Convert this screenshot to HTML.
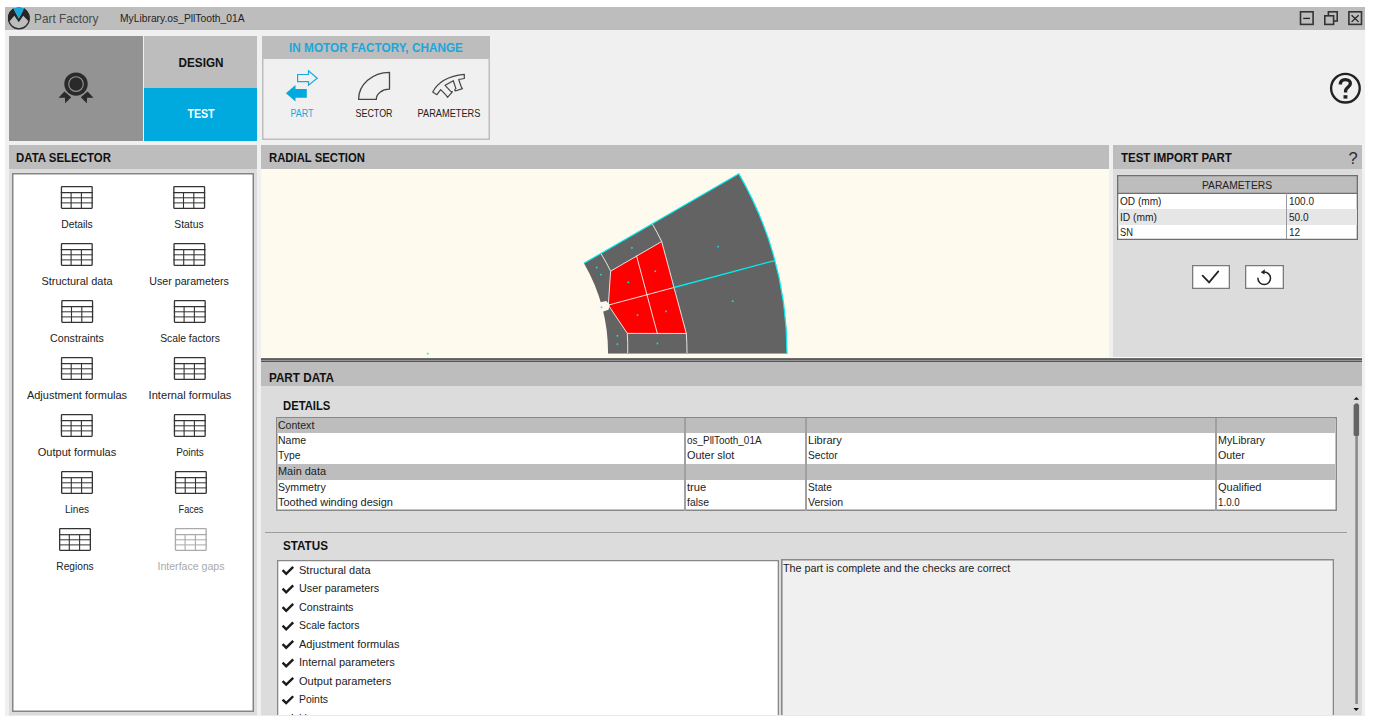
<!DOCTYPE html>
<html><head><meta charset="utf-8"><style>
html,body{margin:0;padding:0;background:#fff;width:1373px;height:725px;overflow:hidden;position:relative;font-family:"Liberation Sans", sans-serif;}
</style></head><body>
<div style="position:absolute;left:5px;top:7px;width:1360px;height:709px;background:#f0f0f0"></div><div style="position:absolute;left:5px;top:7px;width:1360px;height:23px;background:#bdbdbd"></div><svg style="position:absolute;left:5px;top:5px" width="30" height="27" viewBox="5 5 30 27"><circle cx="18.9" cy="18.4" r="10.4" fill="none" stroke="#2b2b2b" stroke-width="1.2"/>
<path d="M9,21.9 A10.6,10.6 0 0 1 12.4,8.9 L13.1,7.9 L18.8,18.4 L24.4,7.9 L25.2,8.9 A10.6,10.6 0 0 1 28.8,21.5 L23.2,15.7 L18.8,22.2 L14.3,15.7 Z" fill="#262626"/>
<path d="M13.1,7.9 L24.4,7.9 L18.8,18.4 Z" fill="#1aa7dc"/></svg><div style="position:absolute;left:33.60px;top:12.77px;font-size:12.20px;line-height:12.20px;font-weight:400;color:#4a4a4a;white-space:nowrap;transform-origin:0 0;transform:scaleX(0.9695);">Part Factory</div><div style="position:absolute;left:119.50px;top:13.16px;font-size:10.80px;line-height:10.80px;font-weight:400;color:#1e1e1e;white-space:nowrap;transform-origin:0 0;transform:scaleX(0.9535);">MyLibrary.os_PllTooth_01A</div><svg style="position:absolute;left:1290px;top:8px" width="75" height="22" viewBox="1290 8 75 22"><rect x="1300.5" y="11.8" width="12.6" height="12.6" fill="none" stroke="#333" stroke-width="1.6"/>
<line x1="1303.2" y1="18.4" x2="1310" y2="18.4" stroke="#222" stroke-width="1.3"/>
<rect x="1328.4" y="11.8" width="8.8" height="9.2" fill="none" stroke="#333" stroke-width="1.6"/>
<rect x="1324.8" y="15.8" width="8.8" height="8.6" fill="#bdbdbd" stroke="#333" stroke-width="1.6"/>
<rect x="1348.9" y="11.8" width="12.6" height="12.6" fill="none" stroke="#333" stroke-width="1.6"/>
<line x1="1351.6" y1="15.2" x2="1358.6" y2="21.9" stroke="#222" stroke-width="1.3"/>
<line x1="1358.6" y1="15.2" x2="1351.6" y2="21.9" stroke="#222" stroke-width="1.3"/></svg><div style="position:absolute;left:9px;top:36px;width:134px;height:104.5px;background:#939393"></div><svg style="position:absolute;left:50px;top:65px" width="50" height="45" viewBox="50 65 50 45"><path d="M64.4,91.6 L58.5,97.7 L64.9,97.7 L65.2,103.3 L71.2,97.2 Z" fill="#2a2a2a"/>
<path d="M87.6,91.6 L93.5,97.7 L87.1,97.7 L86.8,103.3 L80.8,97.2 Z" fill="#2a2a2a"/>
<circle cx="76" cy="84.1" r="12.3" fill="#939393"/>
<circle cx="76" cy="84.1" r="11.7" fill="#2a2a2a"/>
<circle cx="76" cy="84.1" r="7.3" fill="none" stroke="#939393" stroke-width="1.1"/></svg><div style="position:absolute;left:144.4px;top:36px;width:112.6px;height:52px;background:#bdbdbd"></div><div style="position:absolute;left:-99.30px;width:600px;text-align:center;top:55.88px;font-size:13.02px;line-height:13.02px;font-weight:700;color:#111;white-space:nowrap;transform-origin:50% 0;transform:scaleX(0.9010);">DESIGN</div><div style="position:absolute;left:144.4px;top:88px;width:112.6px;height:52.5px;background:#00a9de"></div><div style="position:absolute;left:-99.30px;width:600px;text-align:center;top:108.48px;font-size:12.43px;line-height:12.43px;font-weight:700;color:#fff;white-space:nowrap;transform-origin:50% 0;transform:scaleX(0.8565);">TEST</div><div style="position:absolute;left:262px;top:36px;width:227.5px;height:104.30000000000001px;background:#f0f0f0;box-shadow:inset 0 0 0 1.5px #bdbdbd"></div><div style="position:absolute;left:262px;top:36px;width:227.5px;height:23.4px;background:#bdbdbd"></div><div style="position:absolute;left:76.30px;width:600px;text-align:center;top:41.89px;font-size:12.65px;line-height:12.65px;font-weight:700;color:#1aa7dc;white-space:nowrap;transform-origin:50% 0;transform:scaleX(0.9321);">IN MOTOR FACTORY, CHANGE</div><svg style="position:absolute;left:280px;top:62px" width="200" height="45" viewBox="280 62 200 45"><path d="M297.6,74.5 H308.5 V70.8 L317.2,78.2 L308.5,85.3 V81.6 H297.6 Z" fill="none" stroke="#1ba9dc" stroke-width="1.2" stroke-linejoin="miter"/>
<path d="M285.9,93.3 L295.5,85 V89.1 H306.8 V97.7 H295.5 V101.5 Z" fill="#00a9de"/>
<path d="M358.6,99.4 A31,27 0 0 1 389.5,72.3 V89.2 A13,10 0 0 0 376.3,99.4 Z" fill="none" stroke="#444" stroke-width="1.3" stroke-linejoin="round"/>
<path d="M432.7,92.1 Q440.3,76.8 464.3,74.3 L464.3,78.5 L458.7,79.5 L461.3,87 L462.5,88.6 L455.2,91 L454.7,89.6 L455.9,88.6 L453.3,80.7 L445.1,85.3 L450.5,91.2 L452.4,91.9 L447.5,97.3 L446.5,95.7 L440.7,89.6 L436.9,94.7 Z" fill="none" stroke="#444" stroke-width="1.2" stroke-linejoin="round"/></svg><div style="position:absolute;left:1.80px;width:600px;text-align:center;top:108.34px;font-size:10.82px;line-height:10.82px;font-weight:400;color:#1ba9dc;white-space:nowrap;transform-origin:50% 0;transform:scaleX(0.8326);">PART</div><div style="position:absolute;left:74.20px;width:600px;text-align:center;top:108.34px;font-size:10.82px;line-height:10.82px;font-weight:400;color:#222;white-space:nowrap;transform-origin:50% 0;transform:scaleX(0.8262);">SECTOR</div><div style="position:absolute;left:148.60px;width:600px;text-align:center;top:108.34px;font-size:10.82px;line-height:10.82px;font-weight:400;color:#222;white-space:nowrap;transform-origin:50% 0;transform:scaleX(0.8516);">PARAMETERS</div><svg style="position:absolute;left:1325px;top:68px" width="40" height="40" viewBox="1325 68 40 40"><circle cx="1345.4" cy="88.2" r="14.3" fill="none" stroke="#222" stroke-width="2.4"/></svg><svg style="position:absolute;left:1330px;top:72px" width="32" height="32" viewBox="1330 72 32 32"><path d="M1340.3,84.6 C1340.3,80.6 1342.6,79.6 1345.3,79.6 C1348.6,79.6 1350.4,81.4 1350.4,83.6 C1350.4,86.6 1346.4,87.6 1345.6,90.2 L1345.6,92.6" fill="none" stroke="#222" stroke-width="3.3"/><rect x="1343.5" y="95.2" width="3.9" height="3.4" fill="#222"/></svg><div style="position:absolute;left:9px;top:145px;width:248.3px;height:571px;background:#dcdcdc"></div><div style="position:absolute;left:9px;top:145px;width:248.3px;height:24.400000000000006px;background:#bdbdbd"></div><div style="position:absolute;left:16.00px;top:152.20px;font-size:12.76px;line-height:12.76px;font-weight:700;color:#111;white-space:nowrap;transform-origin:0 0;transform:scaleX(0.8975);">DATA SELECTOR</div><div style="position:absolute;left:11.8px;top:172.8px;width:242.2px;height:539.0px;background:#fff;box-shadow:inset 0 0 0 1.5px #858585"></div><div style="position:absolute;left:-223.20px;width:600px;text-align:center;top:219.31px;font-size:10.50px;line-height:10.50px;font-weight:400;color:#222;white-space:nowrap;transform-origin:50% 0;transform:scaleX(0.9851);">Details</div><div style="position:absolute;left:-110.80px;width:600px;text-align:center;top:219.31px;font-size:10.50px;line-height:10.50px;font-weight:400;color:#222;white-space:nowrap;transform-origin:50% 0;transform:scaleX(0.9877);">Status</div><div style="position:absolute;left:-223.20px;width:600px;text-align:center;top:276.21px;font-size:10.50px;line-height:10.50px;font-weight:400;color:#222;white-space:nowrap;transform-origin:50% 0;transform:scaleX(1.0410);">Structural data</div><div style="position:absolute;left:-110.60px;width:600px;text-align:center;top:276.21px;font-size:10.50px;line-height:10.50px;font-weight:400;color:#222;white-space:nowrap;transform-origin:50% 0;transform:scaleX(1.0183);">User parameters</div><div style="position:absolute;left:-222.80px;width:600px;text-align:center;top:333.11px;font-size:10.50px;line-height:10.50px;font-weight:400;color:#222;white-space:nowrap;transform-origin:50% 0;transform:scaleX(1.0126);">Constraints</div><div style="position:absolute;left:-110.20px;width:600px;text-align:center;top:333.11px;font-size:10.50px;line-height:10.50px;font-weight:400;color:#222;white-space:nowrap;transform-origin:50% 0;transform:scaleX(0.9820);">Scale factors</div><div style="position:absolute;left:-223.10px;width:600px;text-align:center;top:390.01px;font-size:10.50px;line-height:10.50px;font-weight:400;color:#222;white-space:nowrap;transform-origin:50% 0;transform:scaleX(1.0469);">Adjustment formulas</div><div style="position:absolute;left:-110.20px;width:600px;text-align:center;top:390.01px;font-size:10.50px;line-height:10.50px;font-weight:400;color:#222;white-space:nowrap;transform-origin:50% 0;transform:scaleX(1.0585);">Internal formulas</div><div style="position:absolute;left:-223.20px;width:600px;text-align:center;top:446.91px;font-size:10.50px;line-height:10.50px;font-weight:400;color:#222;white-space:nowrap;transform-origin:50% 0;transform:scaleX(1.0521);">Output formulas</div><div style="position:absolute;left:-110.20px;width:600px;text-align:center;top:446.91px;font-size:10.50px;line-height:10.50px;font-weight:400;color:#222;white-space:nowrap;transform-origin:50% 0;transform:scaleX(0.9490);">Points</div><div style="position:absolute;left:-223.00px;width:600px;text-align:center;top:503.81px;font-size:10.50px;line-height:10.50px;font-weight:400;color:#222;white-space:nowrap;transform-origin:50% 0;transform:scaleX(0.9564);">Lines</div><div style="position:absolute;left:-109.10px;width:600px;text-align:center;top:503.81px;font-size:10.50px;line-height:10.50px;font-weight:400;color:#222;white-space:nowrap;transform-origin:50% 0;transform:scaleX(0.8668);">Faces</div><div style="position:absolute;left:-225.00px;width:600px;text-align:center;top:560.71px;font-size:10.50px;line-height:10.50px;font-weight:400;color:#222;white-space:nowrap;transform-origin:50% 0;transform:scaleX(0.9680);">Regions</div><div style="position:absolute;left:-109.20px;width:600px;text-align:center;top:560.71px;font-size:10.50px;line-height:10.50px;font-weight:400;color:#aaa;white-space:nowrap;transform-origin:50% 0;transform:scaleX(1.0080);">Interface gaps</div><svg style="position:absolute;left:40px;top:180px" width="190" height="380" viewBox="40 180 190 380"><g stroke="#333" fill="none">
<rect x="61.449999999999996" y="186.65" width="30.7" height="21.7" stroke-width="1.3" rx="0.5"/>
<line x1="60.8" y1="192.7" x2="92.8" y2="192.7" stroke-width="1.2"/>
<line x1="60.8" y1="197.8" x2="92.8" y2="197.8" stroke-width="1.0"/>
<line x1="60.8" y1="202.9" x2="92.8" y2="202.9" stroke-width="1.0"/>
<line x1="71.1" y1="193" x2="71.1" y2="208" stroke-width="1.1"/>
<line x1="81.4" y1="193" x2="81.4" y2="208" stroke-width="1.1"/>
</g><g stroke="#333" fill="none">
<rect x="173.85" y="186.65" width="30.7" height="21.7" stroke-width="1.3" rx="0.5"/>
<line x1="173.2" y1="192.7" x2="205.2" y2="192.7" stroke-width="1.2"/>
<line x1="173.2" y1="197.8" x2="205.2" y2="197.8" stroke-width="1.0"/>
<line x1="173.2" y1="202.9" x2="205.2" y2="202.9" stroke-width="1.0"/>
<line x1="183.5" y1="193" x2="183.5" y2="208" stroke-width="1.1"/>
<line x1="193.79999999999998" y1="193" x2="193.79999999999998" y2="208" stroke-width="1.1"/>
</g><g stroke="#333" fill="none">
<rect x="61.449999999999996" y="243.65" width="30.7" height="21.7" stroke-width="1.3" rx="0.5"/>
<line x1="60.8" y1="249.7" x2="92.8" y2="249.7" stroke-width="1.2"/>
<line x1="60.8" y1="254.8" x2="92.8" y2="254.8" stroke-width="1.0"/>
<line x1="60.8" y1="259.9" x2="92.8" y2="259.9" stroke-width="1.0"/>
<line x1="71.1" y1="250" x2="71.1" y2="265" stroke-width="1.1"/>
<line x1="81.4" y1="250" x2="81.4" y2="265" stroke-width="1.1"/>
</g><g stroke="#333" fill="none">
<rect x="174.05" y="243.65" width="30.7" height="21.7" stroke-width="1.3" rx="0.5"/>
<line x1="173.4" y1="249.7" x2="205.4" y2="249.7" stroke-width="1.2"/>
<line x1="173.4" y1="254.8" x2="205.4" y2="254.8" stroke-width="1.0"/>
<line x1="173.4" y1="259.9" x2="205.4" y2="259.9" stroke-width="1.0"/>
<line x1="183.70000000000002" y1="250" x2="183.70000000000002" y2="265" stroke-width="1.1"/>
<line x1="194.0" y1="250" x2="194.0" y2="265" stroke-width="1.1"/>
</g><g stroke="#333" fill="none">
<rect x="61.85" y="300.65" width="30.7" height="21.7" stroke-width="1.3" rx="0.5"/>
<line x1="61.2" y1="306.7" x2="93.2" y2="306.7" stroke-width="1.2"/>
<line x1="61.2" y1="311.8" x2="93.2" y2="311.8" stroke-width="1.0"/>
<line x1="61.2" y1="316.9" x2="93.2" y2="316.9" stroke-width="1.0"/>
<line x1="71.5" y1="307" x2="71.5" y2="322" stroke-width="1.1"/>
<line x1="81.80000000000001" y1="307" x2="81.80000000000001" y2="322" stroke-width="1.1"/>
</g><g stroke="#333" fill="none">
<rect x="174.45000000000002" y="300.65" width="30.7" height="21.7" stroke-width="1.3" rx="0.5"/>
<line x1="173.8" y1="306.7" x2="205.8" y2="306.7" stroke-width="1.2"/>
<line x1="173.8" y1="311.8" x2="205.8" y2="311.8" stroke-width="1.0"/>
<line x1="173.8" y1="316.9" x2="205.8" y2="316.9" stroke-width="1.0"/>
<line x1="184.10000000000002" y1="307" x2="184.10000000000002" y2="322" stroke-width="1.1"/>
<line x1="194.4" y1="307" x2="194.4" y2="322" stroke-width="1.1"/>
</g><g stroke="#333" fill="none">
<rect x="61.550000000000004" y="357.65" width="30.7" height="21.7" stroke-width="1.3" rx="0.5"/>
<line x1="60.900000000000006" y1="363.7" x2="92.9" y2="363.7" stroke-width="1.2"/>
<line x1="60.900000000000006" y1="368.8" x2="92.9" y2="368.8" stroke-width="1.0"/>
<line x1="60.900000000000006" y1="373.9" x2="92.9" y2="373.9" stroke-width="1.0"/>
<line x1="71.2" y1="364" x2="71.2" y2="379" stroke-width="1.1"/>
<line x1="81.5" y1="364" x2="81.5" y2="379" stroke-width="1.1"/>
</g><g stroke="#333" fill="none">
<rect x="174.45000000000002" y="357.65" width="30.7" height="21.7" stroke-width="1.3" rx="0.5"/>
<line x1="173.8" y1="363.7" x2="205.8" y2="363.7" stroke-width="1.2"/>
<line x1="173.8" y1="368.8" x2="205.8" y2="368.8" stroke-width="1.0"/>
<line x1="173.8" y1="373.9" x2="205.8" y2="373.9" stroke-width="1.0"/>
<line x1="184.10000000000002" y1="364" x2="184.10000000000002" y2="379" stroke-width="1.1"/>
<line x1="194.4" y1="364" x2="194.4" y2="379" stroke-width="1.1"/>
</g><g stroke="#333" fill="none">
<rect x="61.449999999999996" y="414.65" width="30.7" height="21.7" stroke-width="1.3" rx="0.5"/>
<line x1="60.8" y1="420.7" x2="92.8" y2="420.7" stroke-width="1.2"/>
<line x1="60.8" y1="425.8" x2="92.8" y2="425.8" stroke-width="1.0"/>
<line x1="60.8" y1="430.9" x2="92.8" y2="430.9" stroke-width="1.0"/>
<line x1="71.1" y1="421" x2="71.1" y2="436" stroke-width="1.1"/>
<line x1="81.4" y1="421" x2="81.4" y2="436" stroke-width="1.1"/>
</g><g stroke="#333" fill="none">
<rect x="174.45000000000002" y="414.65" width="30.7" height="21.7" stroke-width="1.3" rx="0.5"/>
<line x1="173.8" y1="420.7" x2="205.8" y2="420.7" stroke-width="1.2"/>
<line x1="173.8" y1="425.8" x2="205.8" y2="425.8" stroke-width="1.0"/>
<line x1="173.8" y1="430.9" x2="205.8" y2="430.9" stroke-width="1.0"/>
<line x1="184.10000000000002" y1="421" x2="184.10000000000002" y2="436" stroke-width="1.1"/>
<line x1="194.4" y1="421" x2="194.4" y2="436" stroke-width="1.1"/>
</g><g stroke="#333" fill="none">
<rect x="61.65" y="471.65" width="30.7" height="21.7" stroke-width="1.3" rx="0.5"/>
<line x1="61.0" y1="477.7" x2="93.0" y2="477.7" stroke-width="1.2"/>
<line x1="61.0" y1="482.8" x2="93.0" y2="482.8" stroke-width="1.0"/>
<line x1="61.0" y1="487.9" x2="93.0" y2="487.9" stroke-width="1.0"/>
<line x1="71.3" y1="478" x2="71.3" y2="493" stroke-width="1.1"/>
<line x1="81.6" y1="478" x2="81.6" y2="493" stroke-width="1.1"/>
</g><g stroke="#333" fill="none">
<rect x="175.55" y="471.65" width="30.7" height="21.7" stroke-width="1.3" rx="0.5"/>
<line x1="174.9" y1="477.7" x2="206.9" y2="477.7" stroke-width="1.2"/>
<line x1="174.9" y1="482.8" x2="206.9" y2="482.8" stroke-width="1.0"/>
<line x1="174.9" y1="487.9" x2="206.9" y2="487.9" stroke-width="1.0"/>
<line x1="185.20000000000002" y1="478" x2="185.20000000000002" y2="493" stroke-width="1.1"/>
<line x1="195.5" y1="478" x2="195.5" y2="493" stroke-width="1.1"/>
</g><g stroke="#333" fill="none">
<rect x="59.65" y="528.65" width="30.7" height="21.7" stroke-width="1.3" rx="0.5"/>
<line x1="59.0" y1="534.7" x2="91.0" y2="534.7" stroke-width="1.2"/>
<line x1="59.0" y1="539.8" x2="91.0" y2="539.8" stroke-width="1.0"/>
<line x1="59.0" y1="544.9" x2="91.0" y2="544.9" stroke-width="1.0"/>
<line x1="69.3" y1="535" x2="69.3" y2="550" stroke-width="1.1"/>
<line x1="79.6" y1="535" x2="79.6" y2="550" stroke-width="1.1"/>
</g><g stroke="#aaa" fill="none">
<rect x="175.45000000000002" y="528.65" width="30.7" height="21.7" stroke-width="1.3" rx="0.5"/>
<line x1="174.8" y1="534.7" x2="206.8" y2="534.7" stroke-width="1.2"/>
<line x1="174.8" y1="539.8" x2="206.8" y2="539.8" stroke-width="1.0"/>
<line x1="174.8" y1="544.9" x2="206.8" y2="544.9" stroke-width="1.0"/>
<line x1="185.10000000000002" y1="535" x2="185.10000000000002" y2="550" stroke-width="1.1"/>
<line x1="195.4" y1="535" x2="195.4" y2="550" stroke-width="1.1"/>
</g></svg><div style="position:absolute;left:261px;top:145px;width:848.4000000000001px;height:24.400000000000006px;background:#bdbdbd"></div><div style="position:absolute;left:269.00px;top:152.20px;font-size:12.76px;line-height:12.76px;font-weight:700;color:#111;white-space:nowrap;transform-origin:0 0;transform:scaleX(0.8872);">RADIAL SECTION</div><div style="position:absolute;left:261px;top:169.4px;width:848.4000000000001px;height:187.6px;background:#fefaee"></div><div style="position:absolute;left:1113px;top:145px;width:249px;height:213px;background:#dcdcdc"></div><div style="position:absolute;left:1113px;top:145px;width:249px;height:24.400000000000006px;background:#bdbdbd"></div><div style="position:absolute;left:1121.00px;top:152.20px;font-size:12.76px;line-height:12.76px;font-weight:700;color:#111;white-space:nowrap;transform-origin:0 0;transform:scaleX(0.9015);">TEST IMPORT PART</div><div style="position:absolute;left:1053.00px;width:600px;text-align:center;top:150.03px;font-size:16.50px;line-height:16.50px;font-weight:400;color:#2a2a2a;white-space:nowrap;transform-origin:50% 0;">?</div><div style="position:absolute;left:261px;top:357px;width:1101px;height:1px;background:#fafafa"></div><div style="position:absolute;left:261px;top:358px;width:1101px;height:1px;background:#6c6c6c"></div><div style="position:absolute;left:261px;top:359px;width:1101px;height:1px;background:#5e5e5e"></div><div style="position:absolute;left:261px;top:360px;width:1101px;height:1px;background:#959595"></div><div style="position:absolute;left:261px;top:361px;width:1101px;height:1px;background:#575757"></div><div style="position:absolute;left:261px;top:362px;width:1101px;height:353px;background:#dcdcdc"></div><div style="position:absolute;left:261px;top:362px;width:1101px;height:24px;background:#bdbdbd"></div><div style="position:absolute;left:269.00px;top:372.00px;font-size:12.76px;line-height:12.76px;font-weight:700;color:#111;white-space:nowrap;transform-origin:0 0;transform:scaleX(0.9170);">PART DATA</div><svg style="position:absolute;left:261px;top:169px" width="848" height="189" viewBox="261 169 848 189"><path d="M608.10,353.50 L787.00,353.50 A359.3,359.3 0 0 0 738.86,173.85 L583.93,263.30 A180.4,180.4 0 0 1 608.10,353.50 Z" fill="#636363"/>
<path d="M661.69,241.52 L686.33,333.48 L627.29,333.36 L608.33,305.10 L610.62,271.15 Z" fill="#ff0000" stroke="#f4f4f4" stroke-width="0.9"/>
<path d="M596.36,302.93 L606.17,300.92 L609.78,304.71 L608.55,309.80 L599.05,312.97 Z" fill="#fdf9ee"/>
<path d="M608.33,305.10 L674.01,287.50" stroke="#f4f4f4" stroke-width="0.9"/>
<path d="M636.48,255.63 L657.45,333.87" stroke="#f4f4f4" stroke-width="0.9"/>
<path d="M600.91,253.50 A200,200 0 0 1 610.62,271.15" fill="none" stroke="#f4f4f4" stroke-width="0.9"/>
<path d="M627.29,333.36 A200,200 0 0 1 627.70,353.50" fill="none" stroke="#f4f4f4" stroke-width="0.9"/>
<path d="M652.26,223.85 A259.3,259.3 0 0 1 661.69,241.52" fill="none" stroke="#f4f4f4" stroke-width="0.9"/>
<path d="M686.33,333.48 A259.3,259.3 0 0 1 687.00,353.50" fill="none" stroke="#f4f4f4" stroke-width="0.9"/>
<path d="M674.01,287.50 L774.76,260.51" stroke="#00ecf0" stroke-width="1.3"/>
<path d="M608.10,353.50 L787.00,353.50 A359.3,359.3 0 0 0 738.86,173.85 L583.93,263.30" fill="none" stroke="#00ecf0" stroke-width="1.2"/>
<rect x="631.1" y="247.1" width="1.6" height="1.6" fill="#00ecf0"/><rect x="595.9" y="266.7" width="1.6" height="1.6" fill="#00ecf0"/><rect x="600.1" y="273.8" width="1.6" height="1.6" fill="#00ecf0"/><rect x="627.6" y="281.6" width="1.6" height="1.6" fill="#00ecf0"/><rect x="654.5" y="270.5" width="1.6" height="1.6" fill="#00ecf0"/><rect x="636.7" y="314.3" width="1.6" height="1.6" fill="#00ecf0"/><rect x="665.3" y="310.6" width="1.6" height="1.6" fill="#00ecf0"/><rect x="616.6" y="335.0" width="1.6" height="1.6" fill="#00ecf0"/><rect x="616.6" y="343.3" width="1.6" height="1.6" fill="#00ecf0"/><rect x="656.6" y="342.7" width="1.6" height="1.6" fill="#00ecf0"/><rect x="600.7" y="306.5" width="1.6" height="1.6" fill="#00ecf0"/><rect x="672.5" y="283.3" width="1.6" height="1.6" fill="#00ecf0"/><rect x="674.6" y="290.5" width="1.6" height="1.6" fill="#00ecf0"/><rect x="717.3" y="245.8" width="1.6" height="1.6" fill="#00ecf0"/><rect x="731.9" y="300.4" width="1.6" height="1.6" fill="#00ecf0"/><rect x="426.9" y="352.8" width="1.6" height="1.6" fill="#00ecf0"/></svg><div style="position:absolute;left:1117px;top:175px;width:241px;height:65px;background:#fff;box-shadow:inset 0 0 0 1.3px #6f6f6f"></div><div style="position:absolute;left:1117px;top:175px;width:241px;height:19px;background:#bdbdbd;box-shadow:inset 0 0 0 1.3px #6f6f6f"></div><div style="position:absolute;left:1118.3px;top:209px;width:238.4000000000001px;height:15.5px;background:#e6e6e6"></div><div style="position:absolute;left:1286px;top:193px;width:1.2999999999999545px;height:46px;background:#9a9a9a"></div><div style="position:absolute;left:936.80px;width:600px;text-align:center;top:181.00px;font-size:10.40px;line-height:10.40px;font-weight:400;color:#222;white-space:nowrap;transform-origin:50% 0;transform:scaleX(0.9905);">PARAMETERS</div><div style="position:absolute;left:1119.60px;top:197.28px;font-size:10.30px;line-height:10.30px;font-weight:400;color:#222;white-space:nowrap;transform-origin:0 0;transform:scaleX(0.9803);">OD (mm)</div><div style="position:absolute;left:1288.90px;top:197.28px;font-size:10.30px;line-height:10.30px;font-weight:400;color:#222;white-space:nowrap;transform-origin:0 0;transform:scaleX(0.9689);">100.0</div><div style="position:absolute;left:1119.60px;top:212.73px;font-size:10.30px;line-height:10.30px;font-weight:400;color:#222;white-space:nowrap;transform-origin:0 0;transform:scaleX(0.9951);">ID (mm)</div><div style="position:absolute;left:1288.90px;top:212.73px;font-size:10.30px;line-height:10.30px;font-weight:400;color:#222;white-space:nowrap;transform-origin:0 0;transform:scaleX(0.9784);">50.0</div><div style="position:absolute;left:1119.60px;top:228.18px;font-size:10.30px;line-height:10.30px;font-weight:400;color:#222;white-space:nowrap;transform-origin:0 0;transform:scaleX(0.9010);">SN</div><div style="position:absolute;left:1288.90px;top:228.18px;font-size:10.30px;line-height:10.30px;font-weight:400;color:#222;white-space:nowrap;transform-origin:0 0;transform:scaleX(0.9796);">12</div><div style="position:absolute;left:1191.5px;top:265.3px;width:38.59999999999991px;height:23.69999999999999px;background:#fff;box-shadow:inset 0 0 0 1.3px #7a7a7a"></div><div style="position:absolute;left:1245px;top:265.3px;width:38.59999999999991px;height:23.69999999999999px;background:#fff;box-shadow:inset 0 0 0 1.3px #7a7a7a"></div><svg style="position:absolute;left:1190px;top:262px" width="100" height="30" viewBox="1190 262 100 30"><polyline points="1202.6,275.6 1209.1,282.4 1218.3,271.4" fill="none" stroke="#222" stroke-width="1.7" stroke-linecap="round" stroke-linejoin="miter"/>
<path d="M1257.9,278.3 A6.3,6.3 0 1 0 1264.2,272" fill="none" stroke="#222" stroke-width="1.5" stroke-linecap="round"/>
<path d="M1260.8,272.2 L1264.9,269.2 L1264.5,274.6 Z" fill="#222"/></svg><div style="position:absolute;left:283.20px;top:399.90px;font-size:12.76px;line-height:12.76px;font-weight:700;color:#111;white-space:nowrap;transform-origin:0 0;transform:scaleX(0.8834);">DETAILS</div><div style="position:absolute;left:276px;top:416.8px;width:1060.5px;height:94.19999999999999px;background:#fff;box-shadow:inset 0 0 0 1.5px #888"></div><div style="position:absolute;left:277.3px;top:418.3px;width:1057.9px;height:15.099999999999966px;background:#bdbdbd"></div><div style="position:absolute;left:277.3px;top:464.0px;width:1057.9px;height:15.600000000000023px;background:#bdbdbd"></div><div style="position:absolute;left:684.1px;top:418px;width:1.5px;height:92.5px;background:#a0a0a0"></div><div style="position:absolute;left:805.3px;top:418px;width:1.5px;height:92.5px;background:#a0a0a0"></div><div style="position:absolute;left:1215.3px;top:418px;width:1.5px;height:92.5px;background:#a0a0a0"></div><div style="position:absolute;left:278.00px;top:420.78px;font-size:10.30px;line-height:10.30px;font-weight:400;color:#222;white-space:nowrap;transform-origin:0 0;transform:scaleX(1.0230);">Context</div><div style="position:absolute;left:278.00px;top:436.08px;font-size:10.30px;line-height:10.30px;font-weight:400;color:#222;white-space:nowrap;transform-origin:0 0;transform:scaleX(1.0218);">Name</div><div style="position:absolute;left:686.80px;top:436.08px;font-size:10.30px;line-height:10.30px;font-weight:400;color:#222;white-space:nowrap;transform-origin:0 0;transform:scaleX(0.9644);">os_PllTooth_01A</div><div style="position:absolute;left:808.00px;top:436.08px;font-size:10.30px;line-height:10.30px;font-weight:400;color:#222;white-space:nowrap;transform-origin:0 0;transform:scaleX(1.0742);">Library</div><div style="position:absolute;left:1217.50px;top:436.08px;font-size:10.30px;line-height:10.30px;font-weight:400;color:#222;white-space:nowrap;transform-origin:0 0;transform:scaleX(1.0350);">MyLibrary</div><div style="position:absolute;left:278.00px;top:451.48px;font-size:10.30px;line-height:10.30px;font-weight:400;color:#222;white-space:nowrap;transform-origin:0 0;transform:scaleX(1.0022);">Type</div><div style="position:absolute;left:686.80px;top:451.48px;font-size:10.30px;line-height:10.30px;font-weight:400;color:#222;white-space:nowrap;transform-origin:0 0;transform:scaleX(1.0593);">Outer slot</div><div style="position:absolute;left:808.00px;top:451.48px;font-size:10.30px;line-height:10.30px;font-weight:400;color:#222;white-space:nowrap;transform-origin:0 0;transform:scaleX(0.9944);">Sector</div><div style="position:absolute;left:1217.50px;top:451.48px;font-size:10.30px;line-height:10.30px;font-weight:400;color:#222;white-space:nowrap;transform-origin:0 0;transform:scaleX(1.0369);">Outer</div><div style="position:absolute;left:278.00px;top:467.08px;font-size:10.30px;line-height:10.30px;font-weight:400;color:#222;white-space:nowrap;transform-origin:0 0;transform:scaleX(1.0625);">Main data</div><div style="position:absolute;left:278.00px;top:482.78px;font-size:10.30px;line-height:10.30px;font-weight:400;color:#222;white-space:nowrap;transform-origin:0 0;transform:scaleX(1.0291);">Symmetry</div><div style="position:absolute;left:686.80px;top:482.78px;font-size:10.30px;line-height:10.30px;font-weight:400;color:#222;white-space:nowrap;transform-origin:0 0;transform:scaleX(1.0806);">true</div><div style="position:absolute;left:808.00px;top:482.78px;font-size:10.30px;line-height:10.30px;font-weight:400;color:#222;white-space:nowrap;transform-origin:0 0;transform:scaleX(0.9896);">State</div><div style="position:absolute;left:1217.50px;top:482.78px;font-size:10.30px;line-height:10.30px;font-weight:400;color:#222;white-space:nowrap;transform-origin:0 0;transform:scaleX(1.0681);">Qualified</div><div style="position:absolute;left:278.00px;top:497.78px;font-size:10.30px;line-height:10.30px;font-weight:400;color:#222;white-space:nowrap;transform-origin:0 0;transform:scaleX(1.0684);">Toothed winding design</div><div style="position:absolute;left:686.80px;top:497.78px;font-size:10.30px;line-height:10.30px;font-weight:400;color:#222;white-space:nowrap;transform-origin:0 0;transform:scaleX(1.0123);">false</div><div style="position:absolute;left:808.00px;top:497.78px;font-size:10.30px;line-height:10.30px;font-weight:400;color:#222;white-space:nowrap;transform-origin:0 0;transform:scaleX(1.0218);">Version</div><div style="position:absolute;left:1217.50px;top:497.78px;font-size:10.30px;line-height:10.30px;font-weight:400;color:#222;white-space:nowrap;transform-origin:0 0;transform:scaleX(0.9469);">1.0.0</div><div style="position:absolute;left:265px;top:532px;width:1082px;height:1.2000000000000455px;background:#9c9c9c"></div><div style="position:absolute;left:282.80px;top:540.10px;font-size:12.76px;line-height:12.76px;font-weight:700;color:#111;white-space:nowrap;transform-origin:0 0;transform:scaleX(0.9160);">STATUS</div><div style="position:absolute;left:277px;top:559.6px;width:502px;height:155.39999999999998px;background:#fff;box-shadow:inset 1.3px 1.3px 0 0 #888, inset -1.3px 0 0 0 #888"></div><div style="position:absolute;left:780.6px;top:559.4px;width:553.9px;height:155.60000000000002px;background:#f0f0f0;box-shadow:inset 1.6px 1.6px 0 0 #8a8a8a, inset -1.3px 0 0 0 #888"></div><div style="position:absolute;left:782.80px;top:562.86px;font-size:10.80px;line-height:10.80px;font-weight:400;color:#222;white-space:nowrap;transform-origin:0 0;transform:scaleX(0.9961);">The part is complete and the checks are correct</div><div style="position:absolute;left:299.10px;top:564.74px;font-size:10.70px;line-height:10.70px;font-weight:400;color:#222;white-space:nowrap;transform-origin:0 0;transform:scaleX(1.0287);">Structural data</div><div style="position:absolute;left:299.10px;top:583.22px;font-size:10.70px;line-height:10.70px;font-weight:400;color:#222;white-space:nowrap;transform-origin:0 0;transform:scaleX(1.0068);">User parameters</div><div style="position:absolute;left:299.10px;top:601.70px;font-size:10.70px;line-height:10.70px;font-weight:400;color:#222;white-space:nowrap;transform-origin:0 0;transform:scaleX(1.0085);">Constraints</div><div style="position:absolute;left:299.10px;top:620.18px;font-size:10.70px;line-height:10.70px;font-weight:400;color:#222;white-space:nowrap;transform-origin:0 0;transform:scaleX(0.9799);">Scale factors</div><div style="position:absolute;left:299.10px;top:638.66px;font-size:10.70px;line-height:10.70px;font-weight:400;color:#222;white-space:nowrap;transform-origin:0 0;transform:scaleX(1.0315);">Adjustment formulas</div><div style="position:absolute;left:299.10px;top:657.14px;font-size:10.70px;line-height:10.70px;font-weight:400;color:#222;white-space:nowrap;transform-origin:0 0;transform:scaleX(1.0338);">Internal parameters</div><div style="position:absolute;left:299.10px;top:675.62px;font-size:10.70px;line-height:10.70px;font-weight:400;color:#222;white-space:nowrap;transform-origin:0 0;transform:scaleX(1.0354);">Output parameters</div><div style="position:absolute;left:299.10px;top:694.10px;font-size:10.70px;line-height:10.70px;font-weight:400;color:#222;white-space:nowrap;transform-origin:0 0;transform:scaleX(0.9783);">Points</div><div style="position:absolute;left:299.10px;top:712.58px;font-size:10.70px;line-height:10.70px;font-weight:400;color:#222;white-space:nowrap;transform-origin:0 0;transform:scaleX(0.9385);">Lines</div><svg style="position:absolute;left:278px;top:561px" width="30" height="154" viewBox="278 561 30 154"><polyline points="282.6,570.20 286.2,573.80 293.2,566.90" fill="none" stroke="#1a1a1a" stroke-width="2.4"/><polyline points="282.6,588.68 286.2,592.28 293.2,585.38" fill="none" stroke="#1a1a1a" stroke-width="2.4"/><polyline points="282.6,607.16 286.2,610.76 293.2,603.86" fill="none" stroke="#1a1a1a" stroke-width="2.4"/><polyline points="282.6,625.64 286.2,629.24 293.2,622.34" fill="none" stroke="#1a1a1a" stroke-width="2.4"/><polyline points="282.6,644.12 286.2,647.72 293.2,640.82" fill="none" stroke="#1a1a1a" stroke-width="2.4"/><polyline points="282.6,662.60 286.2,666.20 293.2,659.30" fill="none" stroke="#1a1a1a" stroke-width="2.4"/><polyline points="282.6,681.08 286.2,684.68 293.2,677.78" fill="none" stroke="#1a1a1a" stroke-width="2.4"/><polyline points="282.6,699.56 286.2,703.16 293.2,696.26" fill="none" stroke="#1a1a1a" stroke-width="2.4"/><polyline points="282.6,718.04 286.2,721.64 293.2,714.74" fill="none" stroke="#1a1a1a" stroke-width="2.4"/></svg><svg style="position:absolute;left:1340px;top:390px" width="22" height="325" viewBox="1340 390 22 325"><path d="M1353.6,399.8 L1356.4,396.9 L1359.1,399.8 Z" fill="#111"/>
<rect x="1355.3" y="403" width="2.6" height="301" fill="#8a8a8a"/>
<rect x="1353.6" y="403.9" width="5.5" height="32" rx="1.5" fill="#646464"/>
<path d="M1353.4,708 L1356.2,711.1 L1359,708 Z" fill="#111"/></svg><div style="position:absolute;left:0px;top:715.8px;width:1373px;height:9.200000000000045px;background:#fff"></div><div style="position:absolute;left:261px;top:714.8px;width:1101px;height:1.0px;background:#e9e9e9"></div><div style="position:absolute;left:9px;top:714.8px;width:248px;height:1.0px;background:#e9e9e9"></div>
</body></html>
